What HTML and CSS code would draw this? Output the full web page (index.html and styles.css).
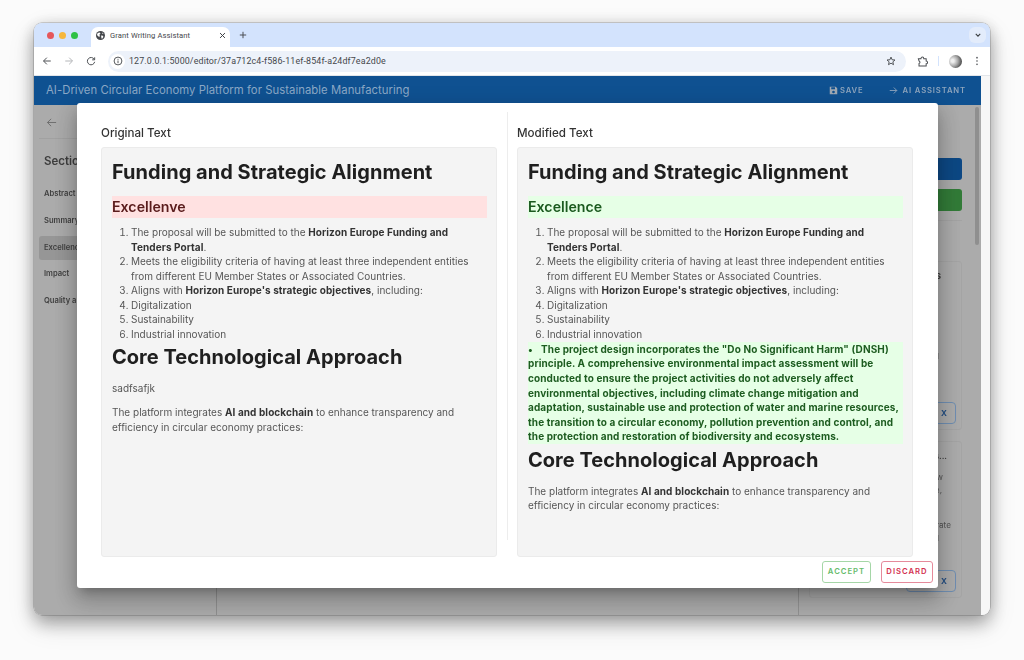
FILE: index.html
```html
<!DOCTYPE html>
<html lang="en">
<head>
<meta charset="utf-8">
<title>Grant Writing Assistant</title>
<link rel="stylesheet" href="styles.css">
</head>
<body>
<div class="window">
  <div class="tabstrip">
    <div class="lights"><i class="light red"></i><i class="light amber"></i><i class="light green"></i></div>
    <div class="tab">
      <svg class="globe" viewBox="0 0 16 16"><circle cx="8" cy="8" r="8" fill="#45484c"/><path d="M3 3.5 6.5 2.5 8 4.5 6 6.5 7 8.5 5.5 11 3.5 8.5 1.5 7.5ZM9 8 12.5 8.5 13 10.5 10.5 14 9.5 11.5ZM11 2.5 13.5 4.5 11.5 5.5Z" fill="#fff"/></svg>
      <span class="tab-title">Grant Writing Assistant</span>
      <svg class="tab-x" viewBox="0 0 10 10"><path d="M1.5 1.5 8.5 8.5M8.5 1.5 1.5 8.5" stroke="#3c4043" stroke-width="1.4" fill="none"/></svg>
    </div>
    <svg class="plus" viewBox="0 0 10 10"><path d="M5 1V9M1 5H9" stroke="#474a4e" stroke-width="1.2" fill="none"/></svg>
    <div class="tab-menu"><svg viewBox="0 0 10 10"><path d="M2.2 3.6 5 6.4 7.8 3.6" stroke="#3c4043" stroke-width="1.4" fill="none"/></svg></div>
  </div>
  <div class="toolbar">
    <svg class="nav" viewBox="0 0 12 12"><path d="M10.5 6H2M5.8 2 1.8 6 5.8 10" stroke="#505357" stroke-width="1.2" fill="none"/></svg>
    <svg class="nav" viewBox="0 0 12 12"><path d="M1.5 6H10M6.2 2 10.2 6 6.2 10" stroke="#b4b6b9" stroke-width="1.2" fill="none"/></svg>
    <svg class="nav" viewBox="0 0 12 12"><path d="M10 4.2A4.4 4.4 0 1 0 10.4 7M10.4 1.6V4.6H7.4" stroke="#505357" stroke-width="1.2" fill="none"/></svg>
    <div class="omnibox">
      <span class="info"><svg viewBox="0 0 12 12"><circle cx="6" cy="6" r="4.7" stroke="#46494d" stroke-width="1.1" fill="none"/><path d="M6 5.4V8.6M6 3.4V4.6" stroke="#46494d" stroke-width="1.1"/></svg></span>
      <span class="url">127.0.0.1:5000/editor/37a712c4-f586-11ef-854f-a24df7ea2d0e</span>
      <svg class="star" viewBox="0 0 12 12"><path d="M6 1.3 7.3 4.5 10.8 4.8 8.2 7 9 10.4 6 8.6 3 10.4 3.8 7 1.2 4.8 4.7 4.5Z" stroke="#45484c" stroke-width="1.1" fill="none"/></svg>
    </div>
    <svg class="puzzle" viewBox="0 0 12 12"><path d="M1.5 3H4.3C4.3 .6 7.4 .6 7.4 3H10V5.5C12 5.6 12 8.4 10 8.5V10.8H2.2V8.2C3.6 7.6 3.6 6 2.2 5.4Z" stroke="#4a4d51" stroke-width="1.1" fill="none"/></svg>
    <i class="tool-sep"></i>
    <i class="avatar"></i>
    <svg class="dots" viewBox="0 0 4 12"><circle cx="2" cy="2" r="1" fill="#505357"/><circle cx="2" cy="6" r="1" fill="#505357"/><circle cx="2" cy="10" r="1" fill="#505357"/></svg>
  </div>
  <div class="content">
    <div class="app">
      <header class="appbar">
        <h1 class="app-title">AI-Driven Circular Economy Platform for Sustainable Manufacturing</h1>
        <span class="app-action save"><svg viewBox="0 0 12 12"><path d="M1 1H9L11 3V11H1ZM3 1.8V4.4H8V1.8ZM6 6.2A1.8 1.8 0 1 0 6 9.8 1.8 1.8 0 1 0 6 6.2Z" fill="#a0a9b3" fill-rule="evenodd"/></svg>SAVE</span>
        <span class="app-action assist"><svg viewBox="0 0 12 12"><path d="M1 6H10.4M6.4 2 10.4 6 6.4 10" stroke="#8ea5bd" stroke-width="1.2" fill="none"/></svg>AI ASSISTANT</span>
      </header>
      <div class="workspace">
        <aside class="sidebar">
          <div class="back"><svg viewBox="0 0 12 12"><path d="M11 6H1.6M5.6 2 1.6 6 5.6 10" stroke="#6a6a6a" stroke-width="1" fill="none"/></svg></div>
          <h2 class="side-head">Sections</h2>
          <ul class="side-list">
            <li>Abstract</li>
            <li>Summary</li>
            <li class="current">Excellence</li>
            <li>Impact</li>
            <li>Quality and</li>
          </ul>
        </aside>
        <main class="centre"></main>
        <aside class="assistant">
          <div class="btn-solid blue"></div>
          <div class="btn-solid leaf"></div>
          <hr class="rule">
          <div class="card first">
            <div class="card-title">S</div>
            <div class="card-line l-first">l</div>
            <div class="card-x">X</div>
          </div>
          <div class="card second">
            <div class="card-title">s...</div>
            <div class="card-line l-w">w</div>
            <div class="card-line l-e">e,</div>
            <div class="card-line l-rate">rate</div>
            <div class="card-line l-i">l</div>
            <div class="card-x">X</div>
          </div>
        </aside>
        <div class="scroll"><i class="thumb"></i></div>
      </div>
    </div>
    <div class="gutter"></div>
  </div>

  <section class="modal">
    <div class="compare">
      <div class="col">
        <h3 class="col-title">Original Text</h3>
        <article class="doc">
          <h1>Funding and Strategic Alignment</h1>
          <h2 class="del">Excellenve</h2>
          <ol>
            <li>The proposal will be submitted to the <strong>Horizon Europe Funding and Tenders Portal</strong>.</li>
            <li>Meets the eligibility criteria of having at least three independent entities from different EU Member States or Associated Countries.</li>
            <li>Aligns with <strong>Horizon Europe's strategic objectives</strong>, including:</li>
            <li>Digitalization</li>
            <li>Sustainability</li>
            <li>Industrial innovation</li>
          </ol>
          <h1>Core Technological Approach</h1>
          <p>sadfsafjk</p>
          <p>The platform integrates <strong>AI and blockchain</strong> to enhance transparency and efficiency in circular economy practices:</p>
        </article>
      </div>
      <i class="divider"></i>
      <div class="col">
        <h3 class="col-title">Modified Text</h3>
        <article class="doc">
          <h1>Funding and Strategic Alignment</h1>
          <h2 class="ins">Excellence</h2>
          <ol>
            <li>The proposal will be submitted to the <strong>Horizon Europe Funding and Tenders Portal</strong>.</li>
            <li>Meets the eligibility criteria of having at least three independent entities from different EU Member States or Associated Countries.</li>
            <li>Aligns with <strong>Horizon Europe's strategic objectives</strong>, including:</li>
            <li>Digitalization</li>
            <li>Sustainability</li>
            <li>Industrial innovation</li>
          </ol>
          <div class="added"><span class="bullet">•</span>The project design incorporates the "Do No Significant Harm" (DNSH) principle. A comprehensive environmental impact assessment will be conducted to ensure the project activities do not adversely affect environmental objectives, including climate change mitigation and adaptation, sustainable use and protection of water and marine resources, the transition to a circular economy, pollution prevention and control, and the protection and restoration of biodiversity and ecosystems.</div>
          <h1>Core Technological Approach</h1>
          <p>The platform integrates <strong>AI and blockchain</strong> to enhance transparency and efficiency in circular economy practices:</p>
        </article>
      </div>
    </div>
    <div class="actions">
      <button class="act accept">ACCEPT</button>
      <button class="act discard">DISCARD</button>
    </div>
  </section>
</div>
</body>
</html>
```
FILE: styles.css
```css
* { box-sizing: border-box; }
html, body { height: 100%; }
body {
  margin: 0;
  padding: 23px 34px 0;
  background: #fbfbfb;
  font-family: Inter, "Liberation Sans", sans-serif;
  overflow: hidden;
}
.window {
  position: relative;
  width: 956px;
  height: 592px;
  display: flex;
  flex-direction: column;
  border-radius: 8px;
  background: #f7f7f7;
  box-shadow: 0 0 0 .5px rgba(0,0,0,.3), 0 8px 18px rgba(0,0,0,.3), 0 10px 28px rgba(0,0,0,.12), 0 0 18px rgba(0,0,0,.08);
  filter: blur(.4px);
}
.tabstrip {
  height: 24px;
  flex: none;
  display: flex;
  align-items: flex-start;
  background: #d3e3fd;
  border-radius: 8px 8px 0 0;
}
.lights { display: flex; gap: 5px; padding: 9px 0 0 13px; width: 57px; }
.light { width: 7px; height: 7px; border-radius: 50%; flex: none; }
.red { background: #e5575b; }
.amber { background: #f6b73c; }
.green { background: #2fc146; }
.tab {
  width: 139px;
  height: 20px;
  margin-top: 4px;
  padding: 0 4px 3px 5px;
  display: flex;
  align-items: center;
  background: #fff;
  border-radius: 7px 7px 0 0;
}
.globe { width: 9px; height: 9px; flex: none; }
.tab-title { margin-left: 5px; font: 400 7.6px/1 Roboto, sans-serif; color: #45484c; flex: 1; white-space: nowrap; letter-spacing: .1px; }
.tab-x { width: 7px; height: 7px; flex: none; }
.plus { width: 8px; height: 8px; margin: 8px 0 0 9px; flex: none; }
.tab-menu {
  margin: 4px 0 0 auto;
  margin-right: 4px;
  width: 17px;
  height: 16px;
  border-radius: 6px;
  background: #e3ecfb;
  display: flex;
  align-items: center;
  justify-content: center;
}
.tab-menu svg { width: 8px; height: 8px; }
.toolbar {
  height: 29px;
  flex: none;
  display: flex;
  align-items: center;
  padding: 0 0 0 8px;
  background: #fff;
  border-bottom: 1px solid #e3e6ea;
}
.nav { width: 10px; height: 10px; flex: none; margin-right: 12px; }
.omnibox {
  width: 798px;
  height: 21px;
  flex: none;
  display: flex;
  align-items: center;
  padding: 0 10px 0 2px;
  background: #edf2fa;
  border-radius: 11px;
}
.info {
  width: 15px;
  height: 15px;
  border-radius: 50%;
  background: #fff;
  display: flex;
  align-items: center;
  justify-content: center;
  flex: none;
}
.info svg { width: 10px; height: 10px; }
.url { margin-left: 4px; font: 400 8.9px/1 Roboto, sans-serif; letter-spacing: .13px; color: #45484c; flex: 1; white-space: nowrap; }
.star { width: 10px; height: 10px; flex: none; }
.puzzle { width: 11px; height: 11px; margin-left: 11px; flex: none; }
.tool-sep { width: 1px; height: 10px; margin-left: 10px; background: #d3e3fd; flex: none; }
.avatar {
  width: 13px;
  height: 13px;
  margin-left: 10px;
  border-radius: 50%;
  background: radial-gradient(circle at 28% 45%, #efefef 0 12%, #a8a8a8 45%, #2c2c2c 90%);
  flex: none;
}
.dots { width: 4px; height: 10px; margin-left: 13px; flex: none; }
.content { flex: 1; display: flex; min-height: 0; border-radius: 0 0 8px 8px; overflow: hidden; }
.app { width: 947px; display: flex; flex-direction: column; min-height: 0; }
.gutter { flex: 1; background: #f7f7f7; }
.appbar {
  height: 29px;
  flex: none;
  display: flex;
  align-items: center;
  padding: 0 15px 0 12px;
  background: #0f5191;
}
.app-title { margin: 0 auto 0 0; font: 400 11.3px/1 Inter, sans-serif; letter-spacing: .05px; color: #8ba8c6; white-space: nowrap; }
.app-action { display: flex; align-items: center; font: 600 7.7px/1 Inter, sans-serif; letter-spacing: .85px; color: #8ea5bd; }
.app-action svg { width: 9px; height: 9px; }
.save svg { margin-right: 2px; }
.assist { margin-left: 25px; }
.assist svg { margin-right: 5px; }
.workspace { flex: 1; display: flex; min-height: 0; background: #ababab; }
.sidebar { width: 183px; flex: none; border-right: 1px solid #8f8f8f; padding: 0 5px; }
.back { height: 34px; padding: 12px 0 0 7px; border-bottom: 1px solid #a1a1a1; }
.back svg { display: block; width: 11px; height: 11px; }
.side-head { margin: 14px 0 0 5px; font: 600 11.5px/16px Inter, sans-serif; color: #3d3d3d; white-space: nowrap; }
.side-list { list-style: none; margin: 13px 0 0; padding: 0; }
.side-list li { height: 24px; margin-bottom: 2.8px; padding-left: 5px; font: 600 7.6px/24px Inter, sans-serif; color: #3f3f3f; white-space: nowrap; border-radius: 3px; }
.side-list .current { background: #969696; }
.centre { flex: 1; }
.assistant { width: 174px; flex: none; border-left: 1px solid #929292; padding: 53px 10px 0 10px; }
.btn-solid { height: 22px; border-radius: 3px; margin-bottom: 9px; }
.blue { background: #0d4884; }
.leaf { background: #327b38; }
.rule { margin: 1px 0 0; border: 0; border-top: 1px solid #a3a3a3; }
.card { border: 1px solid #a4a4a4; border-radius: 3px; display: flex; flex-direction: column; align-items: flex-end; padding: 0 5px 5px 0; }
.first { margin-top: 40px; height: 169px; }
.second { margin-top: 11px; height: 157px; }
.card-title { font: 700 8px/14px Inter, sans-serif; color: #333; }
.first .card-title { margin: 7px 15px 0 0; }
.second .card-title { margin: 7px 9px 0 0; }
.card-line { font: 400 8.2px/13px Inter, sans-serif; color: #555; }
.l-first { margin: 67px 17px 0 0; }
.l-w { margin: 7.5px 13px 0 0; }
.l-e { margin: 0 14px 0 0; }
.l-rate { margin: 22px 5px 0 0; }
.l-i { margin: 0 17px 0 0; }
.card-x {
  margin-top: auto;
  width: 50px;
  height: 22px;
  padding-right: 8px;
  border: 1px solid #6f8eb2;
  border-radius: 4px;
  font: 700 8px/20px Inter, sans-serif;
  color: #254f83;
  text-align: right;
}
.scroll { width: 9px; flex: none; padding: 2px 2px 0 3px; }
.thumb { display: block; height: 138px; background: #8f8f8f; border-radius: 3px; }
.modal {
  position: absolute;
  left: 43px;
  top: 80px;
  width: 861px;
  height: 485px;
  display: flex;
  flex-direction: column;
  background: #fff;
  border-radius: 3px;
  box-shadow: 0 7px 10px -5px rgba(0,0,0,.25), 0 14px 22px 2px rgba(0,0,0,.14), 0 5px 20px 4px rgba(0,0,0,.12);
}
.compare { flex: 1; display: flex; min-height: 0; padding: 0 25px 0 24px; }
.col { width: 396px; display: flex; flex-direction: column; flex: none; }
.col-title { margin: 0; padding-top: 23px; height: 44px; font: 500 11.6px/14px Inter, sans-serif; color: #333; }
.doc {
  flex: 1;
  min-height: 0;
  padding: 0 9px 0 10px;
  background: #f4f4f4;
  border: 1px solid #ebebeb;
  border-radius: 3px;
  font-size: 10px;
  line-height: 14.55px;
  color: #565656;
  overflow: hidden;
}
.divider { width: 1px; margin: 9px 9.5px 17px; background: #ededed; flex: none; }
.doc h1 { margin: 2.8px 0 0; font: 700 20px/26px Inter, sans-serif; letter-spacing: .03px; color: #1f1f1f; white-space: nowrap; }
.doc > h1:first-child { margin-top: 11px; }
.doc h2 { margin: 11px 0 7px; height: 22px; font: 600 14.2px/22px Inter, sans-serif; }
.del { background: #ffe1e1; color: #5a1c1c; }
.ins { background: #e6ffe6; color: #1b5a1f; }
.doc ol { margin: 0; padding-left: 19px; }
.doc strong { font-weight: 700; letter-spacing: .08px; color: #333; }
.doc p { margin: 9.5px 0; }
.doc h1 + p { margin-top: 11px; }
.added { margin-top: .5px; background: #e6ffe6; color: #1d5c20; font-weight: 700; letter-spacing: .115px; }
.bullet { display: inline-block; width: 13px; }
.actions { flex: none; display: flex; justify-content: flex-end; gap: 10px; padding: 4px 5px 5px; }
.act {
  height: 22px;
  padding: 0;
  background: #fff;
  border-radius: 3px;
  font: 600 7.7px/1 Inter, sans-serif;
  letter-spacing: 1px;
}
.accept { width: 49px; border: 1px solid #a5d6a7; color: #66bb6a; }
.discard { width: 52px; border: 1px solid #e58a9b; color: #d32f4f; }
```
